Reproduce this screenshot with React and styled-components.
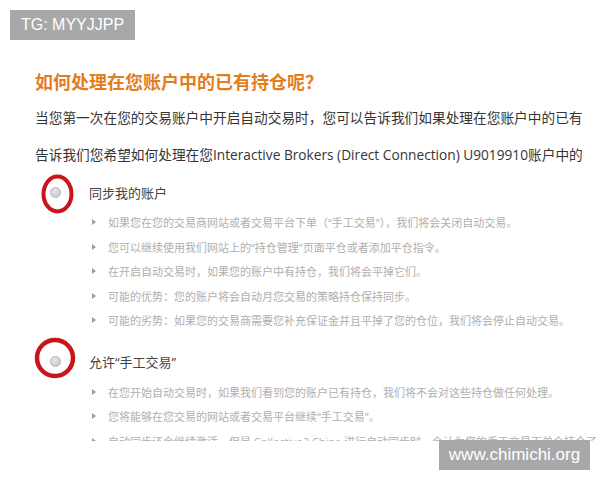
import React from "react";
import styled, { createGlobalStyle } from "styled-components";

const Global = createGlobalStyle`
  html, body { margin: 0; padding: 0; background: #fff; }
  body { font-family: "Open Sans", "Noto Sans CJK SC", sans-serif; }
`;

const Page = styled.div`
  position: relative;
  width: 600px;
  height: 480px;
  overflow: hidden;
  background: #fff;
`;

const Content = styled.div`
  height: 441px;
  overflow: hidden;
  padding: 69px 0 0 35px;
  box-sizing: border-box;
`;

const Title = styled.h2`
  margin: 0;
  font-size: 18px;
  line-height: 24px;
  font-weight: 700;
  color: #e47d1e;
  font-family: "Noto Sans CJK SC", sans-serif;
  white-space: nowrap;
`;

const Para = styled.p`
  margin: 6px 0 0;
  font-size: 13.7px;
  line-height: 37px;
  color: #353535;
  white-space: nowrap;
`;

const Option = styled.div`
  margin-top: ${(p) => p.$gap}px;
`;

const OptionHead = styled.div`
  display: flex;
  align-items: center;
  height: 26px;
  padding-left: 15px;
  gap: 28px;
`;

const Radio = styled.span`
  width: 9px;
  height: 9px;
  border-radius: 50%;
  background: radial-gradient(circle at 40% 35%, #e6e6e6, #c4c4c4);
  border: 1px solid #b4b4b4;
  flex: none;
`;

const Label = styled.span`
  font-size: 13px;
  color: #444;
  font-family: "Open Sans", "Noto Sans CJK SC", sans-serif;
`;

const List = styled.ul`
  list-style: none;
  margin: 5px 0 0;
  padding: 0 0 0 57px;
`;

const Item = styled.li`
  display: flex;
  align-items: center;
  gap: 12px;
  height: 24.5px;
  font-size: 11px;
  color: #afafaf;
  white-space: nowrap;
  &::before {
    content: "";
    flex: none;
    width: 0;
    height: 0;
    border-top: 3px solid transparent;
    border-bottom: 3px solid transparent;
    border-left: 4px solid #9d9d9d;
  }
`;

const Badge = styled.div`
  position: absolute;
  background: #a8a8a8;
  color: #fff;
  font-family: "Liberation Sans", Arial, sans-serif;
  display: flex;
  align-items: center;
  justify-content: center;
  ${(p) => (p.$top ? "top: 10px; left: 10px; width: 125px; height: 30px; font-size: 16px;" : "top: 440px; left: 439px; width: 151px; height: 30px; font-size: 17px;")}
`;

const Mark = styled.svg`
  position: absolute;
  left: 0;
  top: 0;
  pointer-events: none;
`;

const opt1 = [
  "如果您在您的交易商网站或者交易平台下单（“手工交易”），我们将会关闭自动交易。",
  "您可以继续使用我们网站上的“持仓管理”页面平仓或者添加平仓指令。",
  "在开启自动交易时，如果您的账户中有持仓，我们将会平掉它们。",
  "可能的优势：您的账户将会自动月您交易的策略持仓保持同步。",
  "可能的劣势：如果您的交易商需要您补充保证金并且平掉了您的仓位，我们将会停止自动交易。",
];

const opt2 = [
  "在您开始自动交易时，如果我们看到您的账户已有持仓，我们将不会对这些持仓做任何处理。",
  "您将能够在您交易的网站或者交易平台继续“手工交易”。",
  "自动同步还会继续激活，但是 Collective2 China 进行自动同步时，会认为您的手工交易下单会持仓了。",
];

export default function App() {
  return (
    <>
      <Global />
      <Page>
        <Content>
          <Title>如何处理在您账户中的已有持仓呢？</Title>
          <Para>
            当您第一次在您的交易账户中开启自动交易时，您可以告诉我们如果处理在您账户中的已有
            <br />
            告诉我们您希望如何处理在您Interactive Brokers (Direct Connection) U9019910账户中的
          </Para>
          <Option $gap={6}>
            <OptionHead>
              <Radio />
              <Label>同步我的账户</Label>
            </OptionHead>
            <List>
              {opt1.map((t) => (
                <Item key={t}>{t}</Item>
              ))}
            </List>
          </Option>
          <Option $gap={16}>
            <OptionHead>
              <Radio />
              <Label>允许“手工交易”</Label>
            </OptionHead>
            <List>
              {opt2.map((t) => (
                <Item key={t}>{t}</Item>
              ))}
            </List>
          </Option>
        </Content>
        <Mark width="600" height="480" viewBox="0 0 600 480">
          <ellipse cx="57.5" cy="194" rx="14" ry="17.5" fill="none" stroke="#c9141a" strokeWidth="4" />
          <ellipse cx="55" cy="358" rx="18" ry="18" fill="none" stroke="#c9141a" strokeWidth="4.5" />
        </Mark>
        <Badge $top>TG: MYYJJPP</Badge>
        <Badge>www.chimichi.org</Badge>
      </Page>
    </>
  );
}
